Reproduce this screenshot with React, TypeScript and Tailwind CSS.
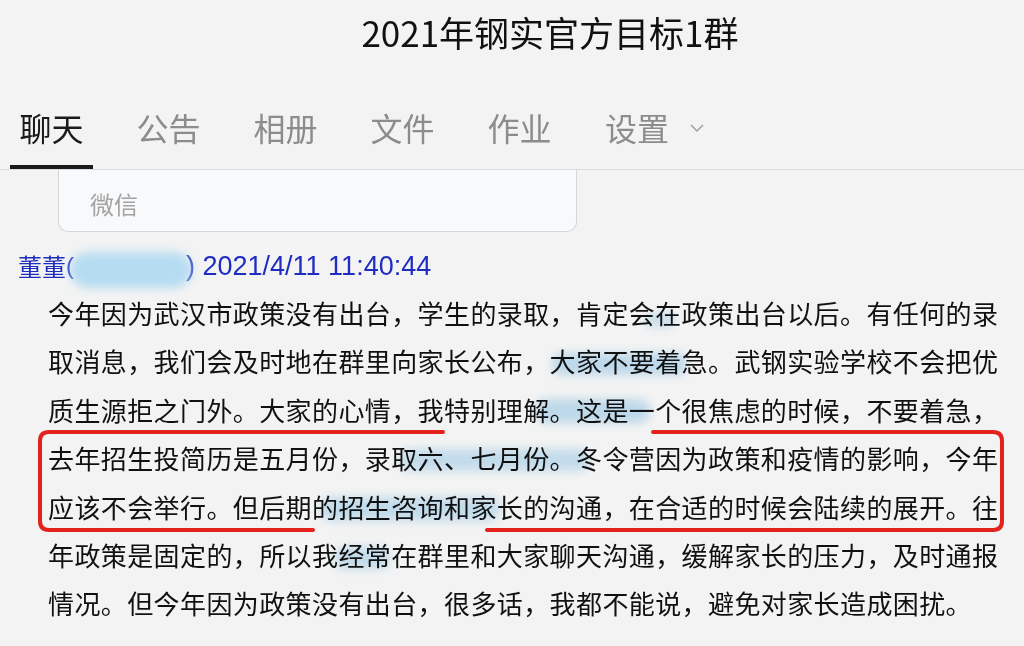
import React from "react";

const tabs = ["聊天", "公告", "相册", "文件", "作业"];

const lines = [
  "今年因为武汉市政策没有出台，学生的录取，肯定会在政策出台以后。有任何的录",
  "取消息，我们会及时地在群里向家长公布，大家不要着急。武钢实验学校不会把优",
  "质生源拒之门外。大家的心情，我特别理解。这是一个很焦虑的时候，不要着急，",
  "去年招生投简历是五月份，录取六、七月份。冬令营因为政策和疫情的影响，今年",
  "应该不会举行。但后期的招生咨询和家长的沟通，在合适的时候会陆续的展开。往",
  "年政策是固定的，所以我经常在群里和大家聊天沟通，缓解家长的压力，及时通报",
  "情况。但今年因为政策没有出台，很多话，我都不能说，避免对家长造成困扰。",
];

const cjk = { fontFamily: '"Noto Sans CJK SC", "Noto Sans", sans-serif' };

const App = () => {
  return (
    <div
      className="relative w-[1024px] h-[646px] overflow-hidden bg-[#f3f3f3]"
      style={cjk}
    >
      {/* title */}
      <header className="h-[64px] flex items-center justify-center pl-[76px] text-[35px] text-[#111]">
        2021年钢实官方目标1群
      </header>

      {/* tabs */}
      <nav className="h-[106px] flex items-end gap-[34px] pl-[10px] border-b border-[#dcdcdc]">
        {tabs.map((t, i) => (
          <div key={t} className="w-[83px] flex flex-col items-center">
            <span
              className={
                i === 0
                  ? "text-[32px] leading-[40px] text-[#1a1a1a]"
                  : "text-[32px] leading-[40px] text-[#8c8c8c]"
              }
            >
              {t}
            </span>
            <div
              className={
                i === 0
                  ? "mt-[18px] h-[4px] w-full bg-[#1a1a1a]"
                  : "mt-[18px] h-[4px] w-full"
              }
            />
          </div>
        ))}
        <div className="flex flex-col pl-[10px]">
          <div className="flex items-center">
            <span className="text-[32px] leading-[40px] text-[#8c8c8c]">
              设置
            </span>
            <svg
              width="16"
              height="10"
              viewBox="0 0 16 10"
              className="ml-[20px] mt-[2px]"
            >
              <path
                d="M2 2 L8 8 L14 2"
                fill="none"
                stroke="#a0a0a0"
                strokeWidth="1.5"
              />
            </svg>
          </div>
          <div className="mt-[18px] h-[4px]" />
        </div>
      </nav>

      {/* search box */}
      <div className="ml-[58px] w-[519px] h-[62px] flex items-center pt-[6px] pl-[31px] bg-[#f8f9fb] border border-t-0 border-[#d6d6d6] rounded-b-[10px]">
        <span className="text-[24px] text-[#a3a3a3]">微信</span>
      </div>

      {/* message header */}
      <div
        className="mt-[18px] pl-[18px] flex items-center h-[32px] text-[24px] text-[#1f2cc0]"
        style={{ fontFamily: '"Liberation Sans", "Noto Sans CJK SC", sans-serif' }}
      >
        <span style={cjk}>董董</span>
        <span>(</span>
        <span className="relative inline-block w-[112px] h-[32px]">
          <span className="absolute left-[-4px] top-[2px] w-[122px] h-[36px] rounded-full bg-[#b0daf1] blur-[5px] opacity-90" />
        </span>
        <span className="text-[27px]">) 2021/4/11 11:40:44</span>
      </div>

      {/* message body */}
      <div className="relative mt-[7px] pl-[48px] text-[26px] leading-[48.4px] text-[#111] tracking-[0.4px]">
        {lines.map((l) => (
          <div key={l} className="whitespace-nowrap">
            {l}
          </div>
        ))}

        {/* blue smudges */}
        <span className="absolute left-[645px] top-[24px] w-[30px] h-[14px] rounded-full bg-[#8ec8ec] opacity-40 blur-[4px] mix-blend-multiply" />
        <span className="absolute left-[552px] top-[64px] w-[135px] h-[22px] rounded-full bg-[#8ec8ec] opacity-50 blur-[5px] mix-blend-multiply" />
        <span className="absolute left-[535px] top-[110px] w-[115px] h-[24px] rounded-full bg-[#8ec8ec] opacity-50 blur-[5px] mix-blend-multiply" />
        <span className="absolute left-[400px] top-[160px] w-[190px] h-[22px] rounded-full bg-[#8ec8ec] opacity-45 blur-[5px] mix-blend-multiply" />
        <span className="absolute left-[320px] top-[208px] w-[180px] h-[24px] rounded-full bg-[#8ec8ec] opacity-45 blur-[5px] mix-blend-multiply" />
        <span className="absolute left-[335px] top-[258px] w-[55px] h-[22px] rounded-full bg-[#8ec8ec] opacity-45 blur-[5px] mix-blend-multiply" />
      </div>

      {/* red annotation box */}
      <svg
        className="absolute left-0 top-0 pointer-events-none"
        width="1024"
        height="646"
        viewBox="0 0 1024 646"
      >
        <path
          d="M443 432 H49 Q40 432 40 441 V521 Q40 530 49 530 H313 M487 530 H993 Q1002 530 1002 521 V441 Q1002 432 993 432 H653"
          fill="none"
          stroke="#e3221d"
          strokeWidth="4"
          strokeLinecap="round"
        />
      </svg>
    </div>
  );
};

export default App;
